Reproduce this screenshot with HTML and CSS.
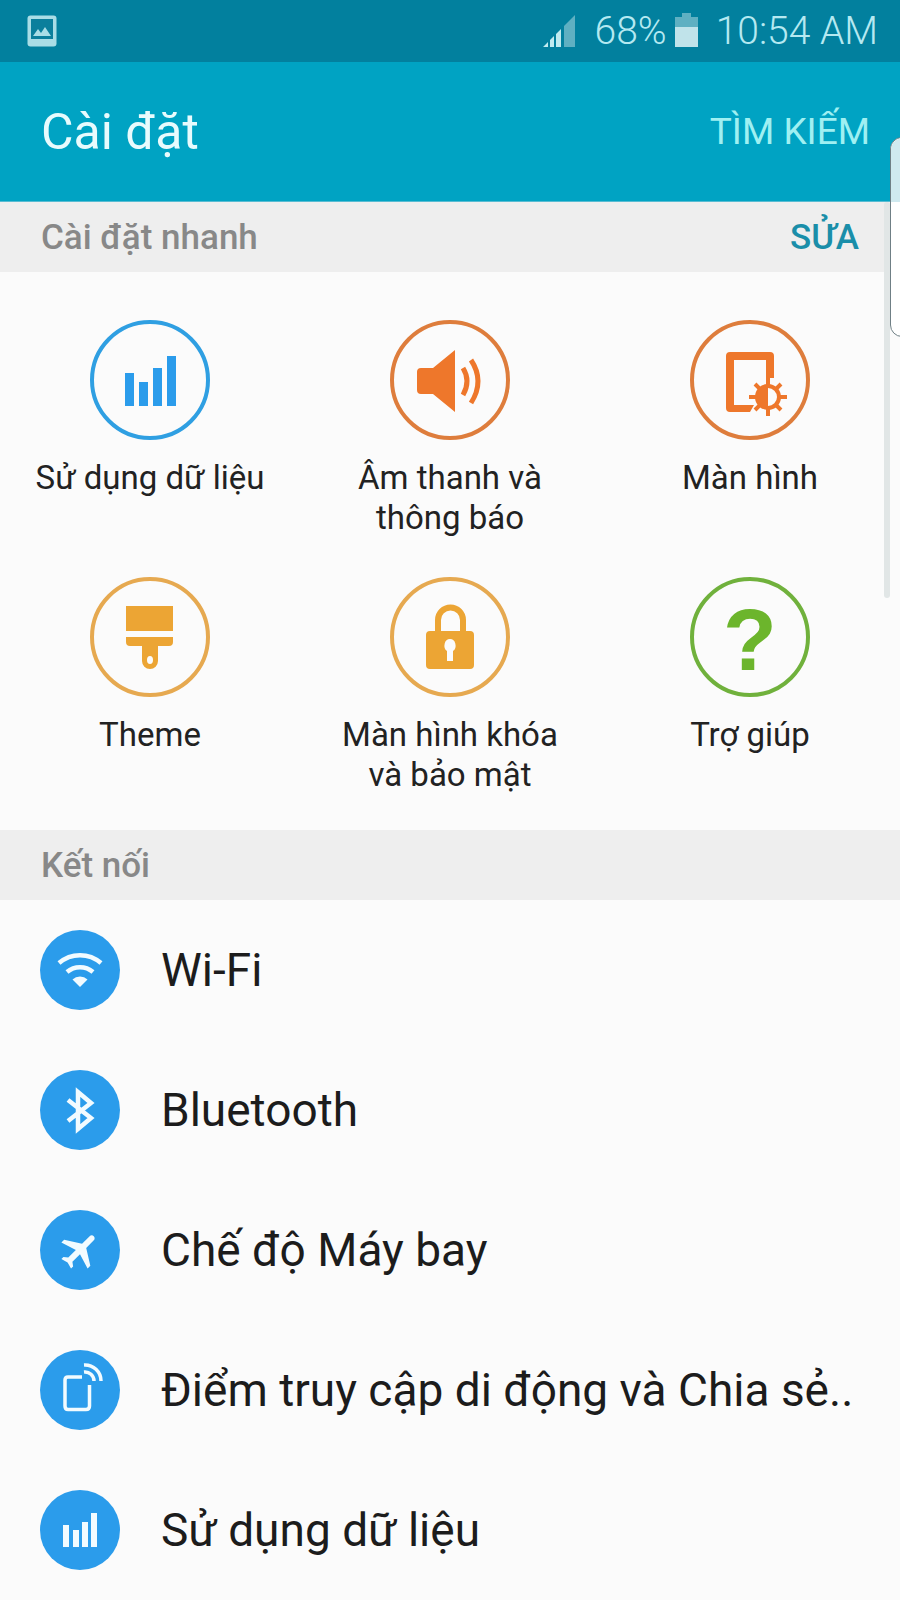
FILE: index.html
```html
<!DOCTYPE html>
<html lang="vi">
<head>
    <meta charset="UTF-8">
    <meta name="viewport" content="width=device-width, initial-scale=1.0">
    <title>Cài đặt</title>
    <link rel="stylesheet" href="styles.css">
</head>
<body>
    <div id="screen">
        <div class="status-bar">
            <svg class="status-picture" width="30" height="32" viewBox="0 0 30 32">
                <rect x="0.5" y="0.5" width="29" height="31" rx="3" fill="#a9dde6"/>
                <rect x="4" y="4" width="22" height="20" fill="#0b7f9c"/>
                <path d="M6 21 L11 14 L14 18 L18 12 L24 21 Z" fill="#a9dde6"/>
            </svg>
            <svg class="status-signal" width="34" height="33" viewBox="0 0 34 33">
                <path d="M22 11 L33 0 V32 H22 Z" fill="#5fb0c2"/>
                <path d="M1 32 L6 27 V32 Z M8 25 L12 21 V32 H8 Z M14 19 L19 14 V32 H14 Z" fill="#c0ebf0"/>
            </svg>
            <span class="status-text">68%</span>
            <svg class="status-battery" width="24" height="34" viewBox="0 0 24 34">
                <path d="M7 0 H16 V4 H23 V14 H0 V4 H7 Z" fill="#5fb0c2"/>
                <rect y="14" width="23" height="20" fill="#c0e3ea"/>
            </svg>
            <span class="status-text status-time">10:54 AM</span>
        </div>

        <div class="app-bar">
            <div class="app-title">Cài đặt</div>
            <div class="app-search">TÌM KIẾM</div>
        </div>

        <div class="section-head">
            <span>Cài đặt nhanh</span>
            <span class="section-edit">SỬA</span>
        </div>

        <div class="quick-grid">
            <div class="quick-item">
                <svg class="ring blue" viewBox="0 0 120 120">
                    <circle cx="60" cy="60" r="58"/>
                    <g class="solid">
                        <rect x="35" y="53" width="9" height="33"/>
                        <rect x="49" y="62" width="9" height="24"/>
                        <rect x="63" y="48" width="9" height="38"/>
                        <rect x="77" y="36" width="9" height="50"/>
                    </g>
                </svg>
                <div class="quick-label">Sử dụng dữ liệu</div>
            </div>
            <div class="quick-item">
                <svg class="ring orange" viewBox="0 0 120 120">
                    <circle cx="60" cy="60" r="58"/>
                    <path class="solid" d="M31 48 H43 L65 30 V92 L43 74 H31 Q27 74 27 70 V52 Q27 48 31 48 Z"/>
                    <path class="wave" d="M73 48 Q81 61 73 75"/>
                    <path class="wave" d="M81 40 Q95 61 81 83"/>
                </svg>
                <div class="quick-label">Âm thanh và<br>thông báo</div>
            </div>
            <div class="quick-item">
                <svg class="ring orange" viewBox="0 0 120 120">
                    <circle cx="60" cy="60" r="58"/>
                    <path class="solid" d="M84 58 V36 Q84 32 80 32 H40 Q36 32 36 36 V88 Q36 92 40 92 H60 L64 85 H44 V40 H76 V58 Z"/>
                    <g class="gear">
                        <path d="M78 58 V96 M59 77 H97 M65 64 L91 90 M91 64 L65 90"/>
                    </g>
                    <circle class="gear-body" cx="78" cy="77" r="11"/>
                    <path class="solid" d="M78 66 A11 11 0 0 0 78 88 Z"/>
                </svg>
                <div class="quick-label">Màn hình</div>
            </div>
            <div class="quick-item">
                <svg class="ring amber" viewBox="0 0 120 120">
                    <circle cx="60" cy="60" r="58"/>
                    <rect class="solid" x="36" y="29" width="47" height="25"/>
                    <path class="solid" fill-rule="evenodd" d="M36 60 H83 V65 Q83 69 79 69 H68 V84 A8 8 0 0 1 52 84 V69 H40 Q36 69 36 65 Z M60 79 A3 4 0 0 0 60 87 A3 4 0 0 0 60 79 Z"/>
                </svg>
                <div class="quick-label">Theme</div>
            </div>
            <div class="quick-item">
                <svg class="ring amber" viewBox="0 0 120 120">
                    <circle cx="60" cy="60" r="58"/>
                    <path class="shackle" d="M48 56 V43 A12.500 12.500 0 0 1 73 43 V56"/>
                    <path class="solid" fill-rule="evenodd" d="M40 54 H80 Q84 54 84 58 V88 Q84 92 80 92 H40 Q36 92 36 88 V58 Q36 54 40 54 Z M60 62 A5.500 6.500 0 0 0 57 74 V84 H63 V74 A5.500 6.500 0 0 0 60 62 Z"/>
                </svg>
                <div class="quick-label">Màn hình khóa<br>và bảo mật</div>
            </div>
            <div class="quick-item">
                <svg class="ring green" viewBox="0 0 120 120">
                    <circle cx="60" cy="60" r="58"/>
                    <text class="help-mark" x="60" y="93" text-anchor="middle">?</text>
                </svg>
                <div class="quick-label">Trợ giúp</div>
            </div>
        </div>

        <div class="section-head">
            <span>Kết nối</span>
        </div>

        <div class="list">
            <div class="list-row">
                <svg class="dot" viewBox="0 0 80 80">
                    <circle cx="40" cy="40" r="40"/>
                    <path class="line" d="M19 33 A32 32 0 0 1 61 33"/>
                    <path class="line" d="M27 42 A20 20 0 0 1 53 42"/>
                    <path class="fill" d="M40 57 L32.500 49.500 A11 11 0 0 1 47.500 49.500 Z"/>
                </svg>
                <div class="list-text">Wi-Fi</div>
            </div>
            <div class="list-row">
                <svg class="dot" viewBox="0 0 80 80">
                    <circle cx="40" cy="40" r="40"/>
                    <path class="line" d="M28 30 L51 48 L38 59 V22 L51 33 L28 51"/>
                </svg>
                <div class="list-text">Bluetooth</div>
            </div>
            <div class="list-row">
                <svg class="dot" viewBox="0 0 80 80">
                    <circle cx="40" cy="40" r="40"/>
                    <path class="fill" transform="translate(40 40) rotate(45) scale(1.95) translate(-11.500 -12)" d="M21 16v-2l-8-5V3.500c0-.83-.67-1.500-1.500-1.500S10 2.670 10 3.500V9l-8 5v2l8-2.500V19l-2 1.500V22l3.500-1 3.500 1v-1.500L13 19v-5.500l8 2.500z"/>
                </svg>
                <div class="list-text">Chế độ Máy bay</div>
            </div>
            <div class="list-row">
                <svg class="dot" viewBox="0 0 80 80">
                    <circle cx="40" cy="40" r="40"/>
                    <path class="line thin" d="M42 27 H28 Q25 27 25 30 V56 Q25 59.500 28 59.500 H46 Q49.500 59.500 49.500 56 V35"/>
                    <path class="line thin" d="M44 22 A9 9 0 0 1 54 31"/>
                    <path class="line thin" d="M44 15 A16 16 0 0 1 61 31"/>
                </svg>
                <div class="list-text">Điểm truy cập di động và Chia sẻ..</div>
            </div>
            <div class="list-row">
                <svg class="dot" viewBox="0 0 80 80">
                    <circle cx="40" cy="40" r="40"/>
                    <g class="fill">
                        <rect x="23" y="35" width="6" height="22"/>
                        <rect x="33" y="40" width="6" height="17"/>
                        <rect x="42" y="32" width="6" height="25"/>
                        <rect x="51" y="23" width="6" height="34"/>
                    </g>
                </svg>
                <div class="list-text">Sử dụng dữ liệu</div>
            </div>
        </div>

        <div class="scrollbar"></div>
        <div class="edge-handle"></div>
    </div>
</body>
</html>
```

FILE: styles.css
```css
body {
    margin: 0;
    font-family: Roboto, 'Liberation Sans', sans-serif;
    background-color: #fbfbfb;
}

#screen {
    position: relative;
    width: 900px;
    height: 1600px;
    overflow: hidden;
    background-color: #fbfbfb;
}

.status-bar {
    display: flex;
    align-items: center;
    height: 62px;
    padding: 0 22px 0 27px;
    background-color: #02809e;
    box-sizing: border-box;
}

.status-picture {
    margin-right: auto;
}

.status-signal {
    margin-right: 19px;
}

.status-text {
    font-size: 39px;
    font-weight: 300;
    color: #b5e9f1;
}

.status-battery {
    margin: -2px 0 0 8px;
}

.status-time {
    margin-left: 17px;
}

.app-bar {
    display: flex;
    justify-content: space-between;
    align-items: center;
    height: 140px;
    padding: 0 30px 0 41px;
    background-color: #00a3c3;
    border-bottom: 1px solid #58bcd2;
    box-sizing: border-box;
}

.app-title {
    font-size: 50px;
    color: #e8fbfd;
}

.app-search {
    font-size: 37px;
    color: #9ff0f2;
}

.section-head {
    display: flex;
    justify-content: space-between;
    align-items: center;
    height: 70px;
    padding: 0 41px;
    background-color: #eeeeee;
    font-size: 35px;
    font-weight: 500;
    color: #888888;
    box-sizing: border-box;
}

.section-edit {
    color: #1a8ea9;
}

.quick-grid {
    display: grid;
    grid-template-columns: repeat(3, 300px);
    row-gap: 39px;
    padding: 48px 0 37px;
    height: 558px;
    box-sizing: border-box;
}

.quick-item {
    display: flex;
    flex-direction: column;
    align-items: center;
}

.ring {
    width: 120px;
    height: 120px;
    flex: none;
}

.ring > circle:first-child {
    fill: none;
    stroke-width: 4;
}

.ring.blue > circle:first-child {
    stroke: #2f9fe2;
}

.ring.orange > circle:first-child {
    stroke: #de7d3c;
}

.ring.amber > circle:first-child {
    stroke: #e6a950;
}

.ring.green > circle:first-child {
    stroke: #70b13c;
}

.blue .solid {
    fill: #2b9ceb;
}

.orange .solid {
    fill: #ee772b;
}

.amber .solid {
    fill: #eca534;
}

.wave {
    fill: none;
    stroke: #ee772b;
    stroke-width: 5;
}

.gear path {
    fill: none;
    stroke: #ee772b;
    stroke-width: 4;
}

.gear-body {
    fill: #fbfbfb;
    stroke: #ee772b;
    stroke-width: 4;
}

.shackle {
    fill: none;
    stroke: #eca534;
    stroke-width: 6;
}

.help-mark {
    font-family: 'Liberation Sans', sans-serif;
    font-size: 88px;
    font-weight: 700;
    fill: #6cb52c;
}

.quick-label {
    margin-top: 18px;
    font-size: 33px;
    line-height: 40px;
    text-align: center;
    color: #222222;
}

.list-row {
    display: flex;
    align-items: center;
    height: 140px;
    padding-left: 40px;
    box-sizing: border-box;
}

.dot {
    width: 80px;
    height: 80px;
    flex: none;
    margin-right: 41px;
}

.dot > circle {
    fill: #2b9ceb;
}

.dot .line {
    fill: none;
    stroke: #f2fbff;
    stroke-width: 4.500;
}

.dot .line.thin {
    stroke-width: 3.500;
}

.dot .fill {
    fill: #f2fbff;
}

.list-text {
    font-size: 46px;
    color: #1c1c1c;
    white-space: nowrap;
}

.scrollbar {
    position: absolute;
    top: 202px;
    left: 884px;
    width: 6px;
    height: 396px;
    border-radius: 3px;
    background-color: #e1e6e6;
}

.edge-handle {
    position: absolute;
    top: 137px;
    left: 890px;
    width: 20px;
    height: 200px;
    border: 1px solid #6f7f85;
    border-radius: 12px 0 0 12px;
    background-color: #ffffff;
    box-sizing: border-box;
}

.edge-handle::before {
    content: "";
    display: block;
    height: 64px;
    border-radius: 12px 0 0 0;
    background-color: #cfe9ef;
}
```
